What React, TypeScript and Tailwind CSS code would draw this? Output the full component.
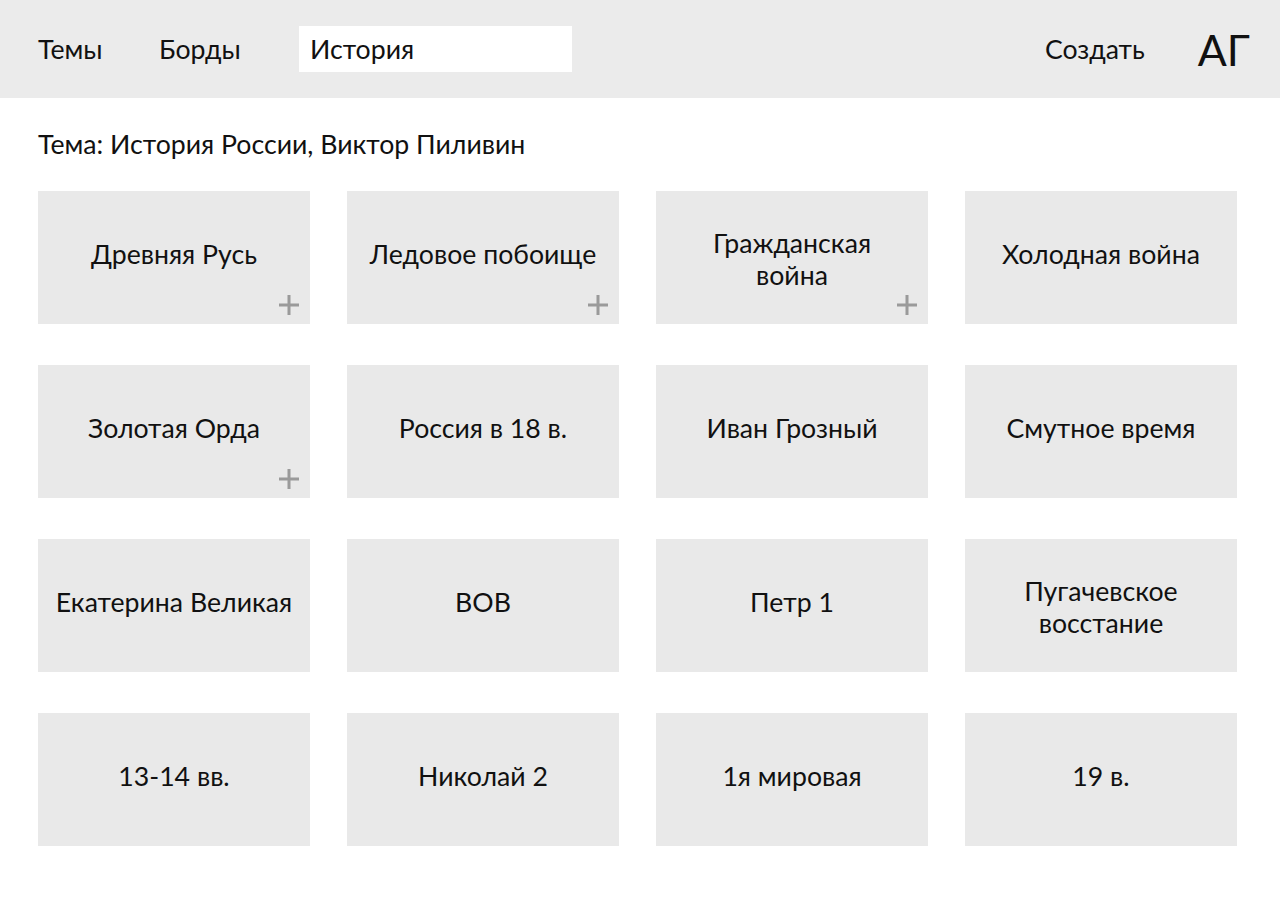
import React from 'react';

const cards: { title: React.ReactNode; plus?: boolean; two?: boolean }[] = [
  { title: 'Древняя Русь', plus: true },
  { title: 'Ледовое побоище', plus: true },
  { title: <>Гражданская<br />война</>, plus: true, two: true },
  { title: 'Холодная война' },
  { title: 'Золотая Орда', plus: true },
  { title: 'Россия в 18 в.' },
  { title: 'Иван Грозный' },
  { title: 'Смутное время' },
  { title: 'Екатерина Великая' },
  { title: 'ВОВ' },
  { title: 'Петр 1' },
  { title: <>Пугачевское<br />восстание</>, two: true },
  { title: '13-14 вв.' },
  { title: 'Николай 2' },
  { title: '1я мировая' },
  { title: '19 в.' },
];

function Plus() {
  return (
    <svg className="absolute right-[11px] bottom-[9px]" width="20" height="20" viewBox="0 0 20 20">
      <path d="M10 0v20M0 10h20" stroke="#9a9a9a" strokeWidth="3" />
    </svg>
  );
}

export default function App() {
  return (
    <div className="min-h-screen bg-white text-[#111] font-['Lato',sans-serif]">
      <header className="h-[98px] bg-[#ebebeb] flex items-center pl-[38px] pr-[30px]">
        <nav className="flex items-center text-[26.67px]">
          <a className="w-[121px]">Темы</a>
          <a className="w-[140px]">Борды</a>
        </nav>
        <div className="w-[273px] h-[46px] bg-white flex items-center pl-[11px] text-[26.67px]">История</div>
        <div className="ml-auto flex items-center">
          <button className="text-[26.67px] mr-[53px]">Создать</button>
          <span className="text-[43px] leading-none">АГ</span>
        </div>
      </header>

      <main className="pt-[30px] pl-[38px] pr-[43px]">
        <h1 className="text-[26.67px] leading-[32px] mb-[31px]">Тема: История России, Виктор Пиливин</h1>
        <div className="grid grid-cols-4 gap-x-[37px] gap-y-[41px]">
          {cards.map((c, i) => (
            <div
              key={i}
              className={`relative h-[133px] bg-[#e9e9e9] flex items-center justify-center text-center text-[26.67px] leading-[32px] ${c.two ? 'pt-[3px]' : 'pb-[8px]'}`}
            >
              <span>{c.title}</span>
              {c.plus && <Plus />}
            </div>
          ))}
        </div>
      </main>
    </div>
  );
}
